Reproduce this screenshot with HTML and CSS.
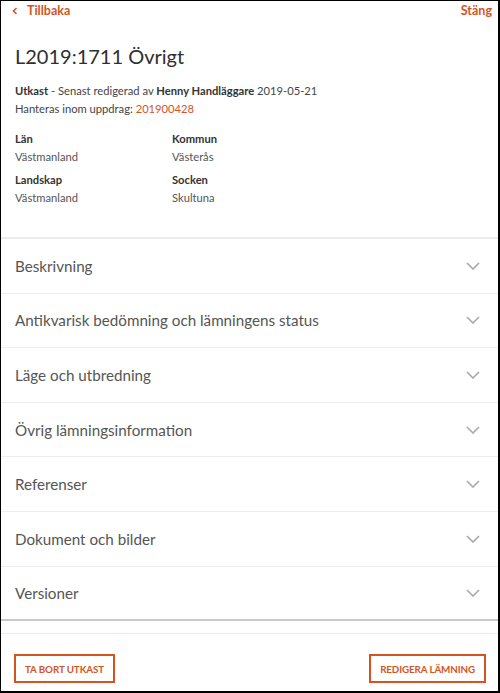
FILE: index.html
```html
<!DOCTYPE html>
<html lang="sv">
<head>
<meta charset="utf-8">
<title>L2019:1711 Övrigt</title>
<link rel="stylesheet" href="styles.css">
</head>
<body>
<div class="frame">
  <div class="topbar">
    <a class="back"><svg class="back-icon" width="6" height="8" viewBox="0 0 6 8"><path d="M4.5 1 L1.5 4 L4.5 7" fill="none" stroke="currentColor" stroke-width="1.6"/></svg><span>Tillbaka</span></a>
    <a class="close">Stäng</a>
  </div>
  <div class="header">
    <h1 class="title">L2019:1711 Övrigt</h1>
    <p class="meta"><b>Utkast</b> - Senast redigerad av <b>Henny Handläggare</b> 2019-05-21</p>
    <p class="meta">Hanteras inom uppdrag: <a class="link">201900428</a></p>
    <div class="facts">
      <div class="fact"><div class="label">Län</div><div class="value">Västmanland</div></div>
      <div class="fact"><div class="label">Kommun</div><div class="value">Västerås</div></div>
      <div class="fact"><div class="label">Landskap</div><div class="value">Västmanland</div></div>
      <div class="fact"><div class="label">Socken</div><div class="value">Skultuna</div></div>
    </div>
  </div>
  <div class="sections">
    <div class="row"><span>Beskrivning</span><svg class="chev" width="14" height="8" viewBox="0 0 14 8"><path d="M1 1 L7 7 L13 1" fill="none" stroke="currentColor" stroke-width="1.6"/></svg></div>
    <div class="row"><span>Antikvarisk bedömning och lämningens status</span><svg class="chev" width="14" height="8" viewBox="0 0 14 8"><path d="M1 1 L7 7 L13 1" fill="none" stroke="currentColor" stroke-width="1.6"/></svg></div>
    <div class="row"><span>Läge och utbredning</span><svg class="chev" width="14" height="8" viewBox="0 0 14 8"><path d="M1 1 L7 7 L13 1" fill="none" stroke="currentColor" stroke-width="1.6"/></svg></div>
    <div class="row"><span>Övrig lämningsinformation</span><svg class="chev" width="14" height="8" viewBox="0 0 14 8"><path d="M1 1 L7 7 L13 1" fill="none" stroke="currentColor" stroke-width="1.6"/></svg></div>
    <div class="row"><span>Referenser</span><svg class="chev" width="14" height="8" viewBox="0 0 14 8"><path d="M1 1 L7 7 L13 1" fill="none" stroke="currentColor" stroke-width="1.6"/></svg></div>
    <div class="row"><span>Dokument och bilder</span><svg class="chev" width="14" height="8" viewBox="0 0 14 8"><path d="M1 1 L7 7 L13 1" fill="none" stroke="currentColor" stroke-width="1.6"/></svg></div>
    <div class="row last"><span>Versioner</span><svg class="chev" width="14" height="8" viewBox="0 0 14 8"><path d="M1 1 L7 7 L13 1" fill="none" stroke="currentColor" stroke-width="1.6"/></svg></div>
  </div>
  <div class="spacer"></div>
  <div class="footer">
    <button class="btn">TA BORT UTKAST</button>
    <button class="btn">REDIGERA LÄMNING</button>
  </div>
</div>
</body>
</html>
```
FILE: styles.css
```css
* { box-sizing: border-box; }
html, body { margin: 0; padding: 0; background: #fff; }
body { font-family: Lato, "Open Sans", sans-serif; color: #333; }
.frame {
  width: 500px;
  height: 693px;
  border-left: 1px solid #000;
  border-top: 1px solid #000;
  border-right: 2px solid #000;
  border-bottom: 2px solid #000;
  display: flex;
  flex-direction: column;
  overflow: hidden;
}
.topbar {
  display: flex;
  justify-content: space-between;
  align-items: center;
  height: 19px;
  padding: 0 6px 0 11px;
  font-size: 12.5px;
  font-weight: 700;
  color: #d4541f;
}
.back { display: flex; align-items: center; gap: 9px; }
.back-icon { display: block; }
.header { padding: 0 14px; }
.title {
  margin: 23px 0 0;
  font-size: 20px;
  font-weight: 400;
  line-height: 26px;
  color: #2f2f2f;
}
.meta {
  margin: 0;
  font-size: 11.2px;
  line-height: 18px;
  color: #444;
}
.title + .meta { margin-top: 13px; }
.meta b { font-weight: 700; color: #333; }
.link { color: #d4541f; }
.facts {
  display: grid;
  grid-template-columns: 157px 1fr;
  row-gap: 5px;
  margin-top: 12px;
  padding-bottom: 30px;
  font-size: 11.2px;
  line-height: 18px;
}
.label { font-weight: 700; color: #333; }
.value { color: #555; }
.sections { border-top: 2px solid #ececec; }
.row {
  display: flex;
  justify-content: space-between;
  align-items: center;
  height: 54.6px;
  padding: 0 18px 0 14px;
  border-bottom: 1px solid #eeeeee;
  font-size: 15.2px;
  color: #555;
}
.row.last { border-bottom: 2px solid #c9c9c9; }
.chev { color: #a8a8a8; display: block; }
.spacer { height: 13px; border-bottom: 1px solid #ececec; }
.footer {
  display: flex;
  justify-content: space-between;
  padding: 20px 12px 0 13px;
}
.btn {
  height: 29px;
  padding: 0 9px;
  background: #fff;
  border: 2px solid #d4541f;
  color: #d4541f;
  font-family: Lato, "Open Sans", sans-serif;
  font-size: 9.8px;
  font-weight: 700;
  letter-spacing: -0.1px;
  cursor: pointer;
}
```
